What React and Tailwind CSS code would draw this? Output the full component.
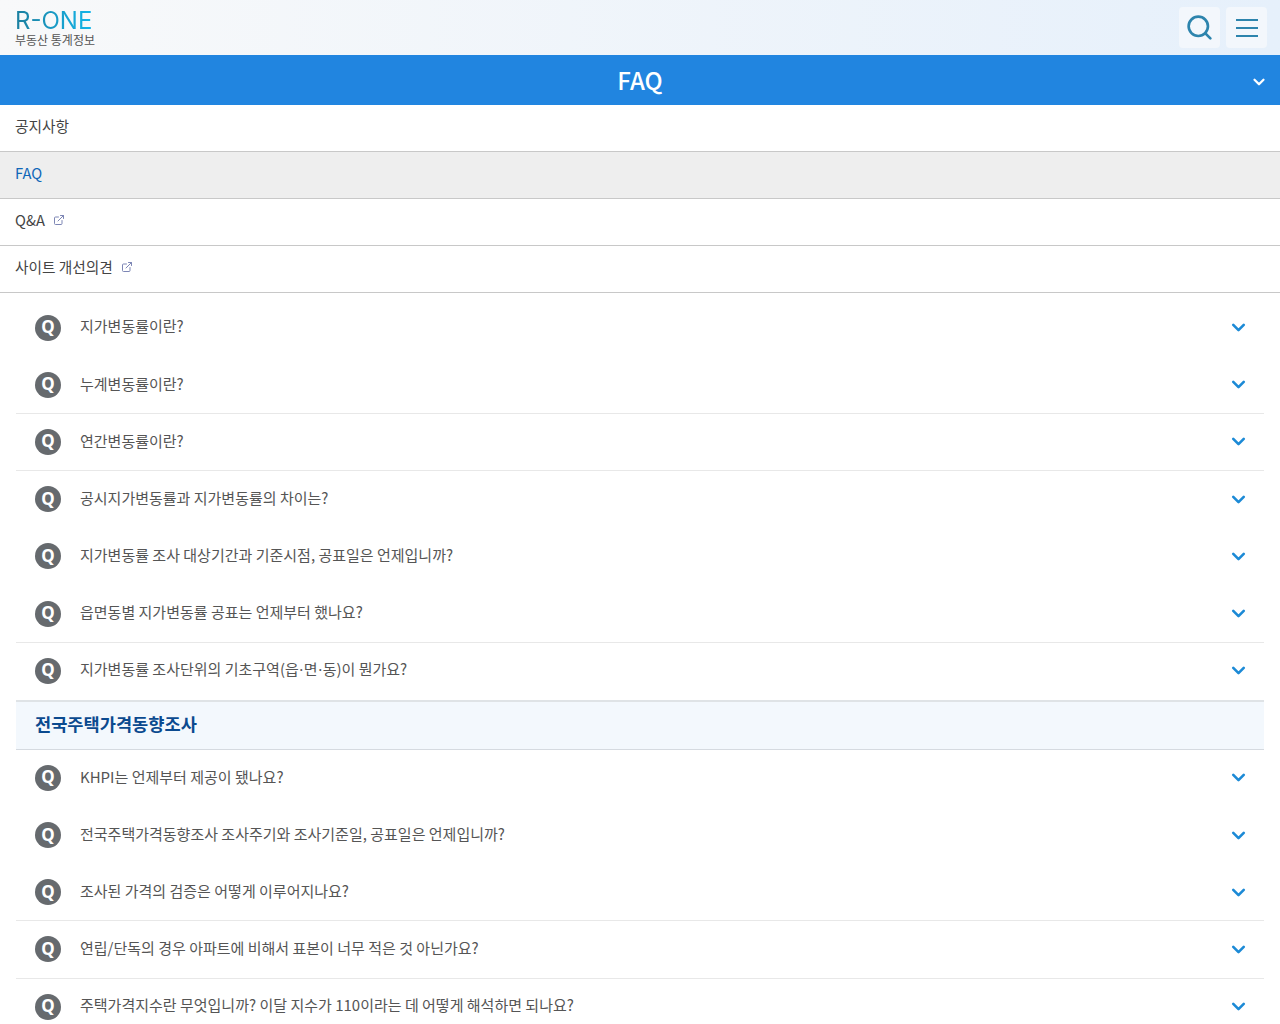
import { ChevronDown, Search, ExternalLink } from 'lucide-react';

const dot = <span className="font-['Noto_Sans',sans-serif] mx-[0.5px]">·</span>;

const groupA = [
  { q: '지가변동률이란?', line: false },
  { q: '누계변동률이란?', line: true },
  { q: '연간변동률이란?', line: true },
  { q: '공시지가변동률과 지가변동률의 차이는?', line: false },
  { q: '지가변동률 조사 대상기간과 기준시점, 공표일은 언제입니까?', line: false },
  { q: '읍면동별 지가변동률 공표는 언제부터 했나요?', line: true },
  { q: <>지가변동률 조사단위의 기초구역(읍{dot}면{dot}동)이 뭔가요?</>, line: false },
];

const groupB = [
  { q: 'KHPI는 언제부터 제공이 됐나요?', line: false },
  { q: '전국주택가격동향조사 조사주기와 조사기준일, 공표일은 언제입니까?', line: false },
  { q: '조사된 가격의 검증은 어떻게 이루어지나요?', line: true },
  { q: '연립/단독의 경우 아파트에 비해서 표본이 너무 적은 것 아닌가요?', line: true },
  { q: '주택가격지수란 무엇입니까? 이달 지수가 110이라는 데 어떻게 해석하면 되나요?', line: false },
];

function Row({ q, line }) {
  return (
    <div className={`flex items-center h-[57.2px] pl-[19px] pr-[15px] border-b ${line ? 'border-[#e8e8e8]' : 'border-transparent'}`}>
      <span className="flex items-center justify-center w-[26px] h-[26px] rounded-full bg-[#666a6e] text-white text-[17px] font-bold leading-none shrink-0 font-['Noto_Sans',sans-serif] pb-[2px]">Q</span>
      <span className="ml-[19px] flex-1 text-[15px] text-[#555] -translate-y-px">{q}</span>
      <ChevronDown size={21} strokeWidth={3} className="text-[#1c8ad6]" />
    </div>
  );
}

function NavItem({ children, active, link }) {
  return (
    <div className={`flex items-center h-[47px] pl-[15px] pb-1 border-b border-[#c8c8c8] text-[14.7px] ${active ? 'bg-[#eeeeee] text-[#1067b8]' : 'text-[#444]'}`}>
      {children}
      {link && <ExternalLink size={12} className="ml-[8px] text-[#7d86b5]" />}
    </div>
  );
}

export default function App() {
  return (
    <div className="w-[1280px] h-[1024px] overflow-hidden bg-white font-['Noto_Sans_CJK_KR','Noto_Sans',sans-serif]">
      <header className="flex items-center justify-between h-[55px] pl-[15px] pr-[13px] bg-gradient-to-r from-[#f8f9fa] to-[#e6f0fb]">
        <div className="flex flex-col gap-[2px] pt-[3px]">
          <span className="font-['Inter',sans-serif] text-[24px] font-normal leading-[20px] bg-gradient-to-r from-[#1b7f9f] to-[#12b5ea] bg-clip-text text-transparent w-fit">R-ONE</span>
          <span className="text-[12px] leading-[14px] text-[#555]">부동산 통계정보</span>
        </div>
        <div className="flex gap-[6px]">
          <button className="flex items-center justify-center w-[41px] h-[41px] rounded bg-[#f3f7fc]">
            <Search size={29} strokeWidth={2.2} className="text-[#2d84ad]" />
          </button>
          <button className="flex flex-col items-center justify-center gap-[6px] w-[41px] h-[41px] rounded bg-[#f3f7fc]">
            <span className="w-[22px] h-[2px] bg-[#2d84ad]" />
            <span className="w-[22px] h-[2px] bg-[#2d84ad]" />
            <span className="w-[22px] h-[2px] bg-[#2d84ad]" />
          </button>
        </div>
      </header>

      <div className="relative flex items-center justify-center h-[50px] bg-[#2185e0] text-white text-[24px] font-medium">
        FAQ
        <ChevronDown size={18} strokeWidth={3} className="absolute right-[12px] top-[18px]" />
      </div>

      <nav>
        <NavItem>공지사항</NavItem>
        <NavItem active>FAQ</NavItem>
        <NavItem link>Q&amp;A</NavItem>
        <NavItem link>사이트 개선의견</NavItem>
      </nav>

      <div className="mx-[16px] mt-[6.5px]">
        {groupA.map((item, i) => <Row key={i} {...item} />)}
        <div className="flex items-center h-[50px] pl-[19px] pb-[2px] bg-[#f3f8fd] border-t-2 border-b border-t-[#dfe3e6] border-b-[#d5dae0] text-[17.6px] font-bold text-[#0b4a8f]">
          전국주택가격동향조사
        </div>
        {groupB.map((item, i) => <Row key={i} {...item} />)}
      </div>
    </div>
  );
}
